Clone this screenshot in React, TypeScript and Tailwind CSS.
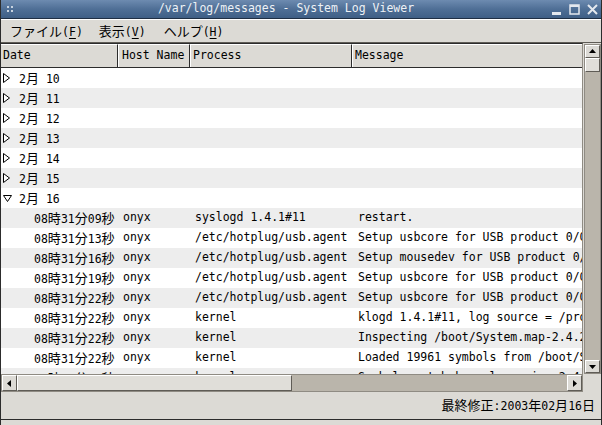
import React from "react";

const CJK = /([\u3000-\u30ff\u4e00-\u9fff\uff00-\uffef]+)/;

function T({ s }: { s: string }) {
  const parts = s.split(CJK);
  return (
    <>
      {parts.map((p, i) =>
        i % 2 === 1 ? (
          <span key={i} className="text-[13px] font-['Noto_Sans_CJK_JP',sans-serif]">
            {p}
          </span>
        ) : (
          <React.Fragment key={i}>{p}</React.Fragment>
        )
      )}
    </>
  );
}

type Row =
  | { kind: "group"; label: string; open: boolean }
  | { kind: "item"; time: string; host: string; proc: string; msg: string };

const rows: Row[] = [
  { kind: "group", label: "2月 10", open: false },
  { kind: "group", label: "2月 11", open: false },
  { kind: "group", label: "2月 12", open: false },
  { kind: "group", label: "2月 13", open: false },
  { kind: "group", label: "2月 14", open: false },
  { kind: "group", label: "2月 15", open: false },
  { kind: "group", label: "2月 16", open: true },
  { kind: "item", time: "08時31分09秒", host: "onyx", proc: "syslogd 1.4.1#11", msg: "restart." },
  { kind: "item", time: "08時31分13秒", host: "onyx", proc: "/etc/hotplug/usb.agent", msg: "Setup usbcore for USB product 0/0/0" },
  { kind: "item", time: "08時31分16秒", host: "onyx", proc: "/etc/hotplug/usb.agent", msg: "Setup mousedev for USB product 0/0/0" },
  { kind: "item", time: "08時31分19秒", host: "onyx", proc: "/etc/hotplug/usb.agent", msg: "Setup usbcore for USB product 0/0/0" },
  { kind: "item", time: "08時31分22秒", host: "onyx", proc: "/etc/hotplug/usb.agent", msg: "Setup usbcore for USB product 0/0/0" },
  { kind: "item", time: "08時31分22秒", host: "onyx", proc: "kernel", msg: "klogd 1.4.1#11, log source = /proc/kmsg started." },
  { kind: "item", time: "08時31分22秒", host: "onyx", proc: "kernel", msg: "Inspecting /boot/System.map-2.4.22" },
  { kind: "item", time: "08時31分22秒", host: "onyx", proc: "kernel", msg: "Loaded 19961 symbols from /boot/System.map-2.4.22." },
  { kind: "item", time: "08時31分22秒", host: "onyx", proc: "kernel", msg: "Symbols match kernel version 2.4.22." },
];

function Tri({ open }: { open: boolean }) {
  return open ? (
    <svg width="9" height="7" viewBox="0 0 9 7" className="shrink-0">
      <path d="M0.5 0.5 L8.5 0.5 L4.5 6.5 Z" fill="white" stroke="black" strokeWidth="1" />
    </svg>
  ) : (
    <svg width="7" height="10" viewBox="0 0 7 10" className="shrink-0">
      <path d="M0.5 0.5 L6.5 5 L0.5 9.5 Z" fill="white" stroke="black" strokeWidth="1" />
    </svg>
  );
}

function ArrowBtn({ dir, className }: { dir: "up" | "down" | "left" | "right"; className?: string }) {
  const d =
    dir === "up"
      ? "M1 6 L4.5 2 L8 6 Z"
      : dir === "down"
      ? "M1 3 L4.5 7 L8 3 Z"
      : dir === "left"
      ? "M6 1 L2 4.5 L6 8 Z"
      : "M3 1 L7 4.5 L3 8 Z";
  return (
    <div
      className={
        "flex items-center justify-center bg-[#dcdad5] border border-t-white border-l-white border-b-[#5f5c56] border-r-[#5f5c56] " +
        (className ?? "")
      }
    >
      <svg width="9" height="9" viewBox="0 0 9 9">
        <path d={d} fill="black" />
      </svg>
    </div>
  );
}

export default function App() {
  const mono = "font-['DejaVu_Sans_Mono','Noto_Sans_CJK_JP',monospace]";
  return (
    <div className={"w-[602px] h-[425px] overflow-hidden bg-[#dcdad5] flex flex-col border-x border-[#2c2c2c] text-[11.5px] text-black " + mono}>
      {/* Title bar */}
      <div className="h-[19px] shrink-0 flex items-center bg-gradient-to-b from-[#6d8bb0] via-[#4f6f96] to-[#3f5f86] border-b border-[#1f2f44] text-[#eef2f6] pl-[6px] pr-[3px]">
        <div className="grid grid-cols-2 gap-[2px] w-[6px]">
          <div className="w-[2px] h-[2px] bg-[#c9d4e0]" />
          <div className="w-[2px] h-[2px] bg-[#c9d4e0]" />
          <div className="w-[2px] h-[2px] bg-[#c9d4e0]" />
          <div className="w-[2px] h-[2px] bg-[#c9d4e0]" />
        </div>
        <div className="flex-1 text-center text-[11.5px] tracking-[0px] pl-[8px]">/var/log/messages - System Log Viewer</div>
        <div className="flex items-center gap-[7px]">
          <svg width="11" height="11" viewBox="0 0 11 11">
            <rect x="1" y="8" width="9" height="3" fill="#e4e8ee" />
          </svg>
          <svg width="11" height="11" viewBox="0 0 11 11">
            <rect x="1" y="1" width="9" height="9" fill="none" stroke="#e4e8ee" strokeWidth="1.5" />
            <rect x="1" y="1" width="9" height="2" fill="#e4e8ee" />
          </svg>
          <svg width="11" height="11" viewBox="0 0 11 11">
            <path d="M1 1 L10 10 M10 1 L1 10" stroke="#e4e8ee" strokeWidth="2" />
          </svg>
        </div>
      </div>

      {/* Menu bar */}
      <div className="h-[24px] shrink-0 flex items-center border-t border-white border-b border-b-[#5f5c56] pl-[9px] gap-[16px]">
        <span>
          <T s="ファイル" />(<span className="underline underline-offset-2">F</span>)
        </span>
        <span>
          <T s="表示" />(<span className="underline underline-offset-2">V</span>)
        </span>
        <span className="ml-[2px]">
          <T s="ヘルプ" />(<span className="underline underline-offset-2">H</span>)
        </span>
      </div>

      {/* Main area */}
      <div className="h-[331px] shrink-0 flex">
        <div className="w-[582px] flex flex-col border-t border-[#2c2c2c] border-r border-r-[#8f8b83]">
          {/* header */}
          <div className="h-[24px] shrink-0 flex border-b border-[#2c2c2c] bg-[#dcdad5]">
            <div className="w-[117px] flex items-center pl-[2px] border-r border-[#2c2c2c] border-t border-t-white">Date</div>
            <div className="w-[72px] flex items-center pl-[3px] border-r border-[#2c2c2c] border-t border-t-white border-l border-l-white">Host Name</div>
            <div className="w-[162px] flex items-center pl-[2px] border-r border-[#2c2c2c] border-t border-t-white border-l border-l-white">Process</div>
            <div className="flex-1 flex items-center pl-[2px] border-t border-t-white border-l border-l-white">Message</div>
          </div>
          {/* rows */}
          <div className="flex-1 overflow-hidden bg-white">
            {rows.map((r, i) => (
              <div
                key={i}
                className={"h-[20px] flex items-center whitespace-nowrap overflow-hidden " + (i % 2 === 1 ? "bg-[#ededed]" : "bg-white")}
              >
                {r.kind === "group" ? (
                  <div className="flex items-center pl-[2px]">
                    <div className="w-[14px] flex items-center">
                      <Tri open={r.open} />
                    </div>
                    <span className="pl-[2px]">
                      <T s={r.label} />
                    </span>
                  </div>
                ) : (
                  <>
                    <div className="w-[119px] shrink-0 pl-[33px] overflow-hidden">
                      <T s={r.time} />
                    </div>
                    <div className="w-[72px] shrink-0 pl-[3px]">{r.host}</div>
                    <div className="w-[162px] shrink-0 pl-[3px] overflow-hidden">{r.proc}</div>
                    <div className="flex-1 pl-[4px] overflow-hidden">{r.msg}</div>
                  </>
                )}
              </div>
            ))}
          </div>
        </div>
        {/* vertical scrollbar */}
        <div className="ml-[1px] mt-[1px] w-[17px] flex flex-col bg-[#bab5ab] border border-[#8f8b83]">
          <ArrowBtn dir="up" className="h-[13px] shrink-0" />
          <div className="h-[14px] shrink-0 bg-[#e0ded9] border border-t-white border-l-white border-b-[#5f5c56] border-r-[#5f5c56]" />
          <div className="flex-1" />
          <ArrowBtn dir="down" className="h-[13px] shrink-0" />
        </div>
      </div>

      {/* Horizontal scrollbar */}
      <div className="h-[18px] shrink-0 flex">
        <div className="w-[582px] flex bg-[#bab5ab] border border-[#8f8b83] p-0">
          <ArrowBtn dir="left" className="w-[15px] shrink-0" />
          <div className="w-[275px] shrink-0 bg-[#e0ded9] border border-t-white border-l-white border-b-[#5f5c56] border-r-[#5f5c56]" />
          <div className="flex-1" />
          <ArrowBtn dir="right" className="w-[15px] shrink-0" />
        </div>
        <div className="flex-1" />
      </div>

      {/* Status bar */}
      <div className="h-[28px] shrink-0 flex items-center justify-end pr-[6px] border-b border-[#2c2c2c]">
        <span>
          <T s="最終修正" />:2003<T s="年" />02<T s="月" />16<T s="日" />
        </span>
      </div>
      <div className="flex-1" />
    </div>
  );
}
